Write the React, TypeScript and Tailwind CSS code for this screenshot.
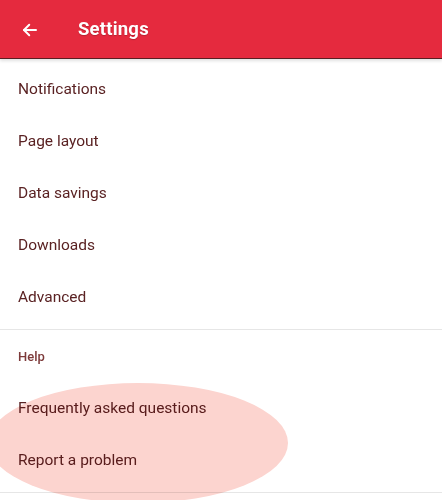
import React from 'react';

const mainItems = ['Notifications', 'Page layout', 'Data savings', 'Downloads', 'Advanced'];
const helpItems = ['Frequently asked questions', 'Report a problem'];

const ArrowLeft = () => (
  <svg width="18" height="18" viewBox="0 0 24 24" fill="none" stroke="white" strokeWidth="2.6" strokeLinecap="round" strokeLinejoin="round">
    <path d="M20 12H4" />
    <path d="M11 5l-7 7 7 7" />
  </svg>
);

const App: React.FC = () => {
  return (
    <div className="relative w-[442px] h-[500px] overflow-hidden bg-white font-['Roboto',sans-serif]">
      {/* Header */}
      <header className="h-[59px] bg-[#e52a3e] border-b border-[#5a1f22] flex items-center shadow-[0_2px_3px_rgba(0,0,0,0.12)] relative z-20">
        <div className="w-[78px] pl-[21px] pt-[2px] flex items-center">
          <ArrowLeft />
        </div>
        <h1 className="pt-[2px] text-white text-[18.5px] font-bold tracking-[0.2px] [text-shadow:0_1px_1px_rgba(0,0,0,0.2)]">Settings</h1>
      </header>

      {/* Main settings */}
      <ul className="pt-[5px] pb-[5px] border-b border-[#e6e6e6] relative z-10">
        {mainItems.map((item) => (
          <li key={item} className="h-[52px] flex items-center px-[18px] text-[15.5px] text-[#5a2223]">
            {item}
          </li>
        ))}
      </ul>

      {/* Help */}
      <div className="pt-[1px] pb-[5px] border-b border-[#e6e6e6] relative z-10">
        <div className="h-[52px] flex items-center px-[18px] text-[13px] font-medium text-[#7d3a3a]">Help</div>
        {helpItems.map((item) => (
          <div key={item} className="h-[52px] flex items-center px-[18px] text-[15.5px] text-[#5a2223]">
            {item}
          </div>
        ))}
      </div>

      {/* highlight */}
      <div className="absolute left-[-12px] top-[383px] w-[300px] h-[120px] rounded-[50%] bg-[#fcd4cf] mix-blend-multiply z-10" />
    </div>
  );
};

export default App;
